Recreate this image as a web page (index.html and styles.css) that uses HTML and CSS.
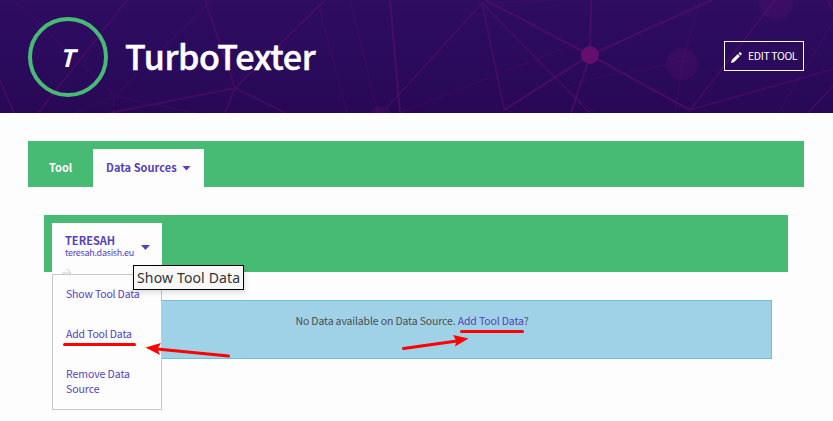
FILE: index.html
```html
<!DOCTYPE html>
<html lang="en">
<head>
<meta charset="utf-8">
<title>TurboTexter</title>
<link rel="stylesheet" href="styles.css">
</head>
<body>
<header class="hero">
  <svg class="network" viewBox="0 0 833 113" aria-hidden="true">
    <g class="faint">
      <path d="M15 0L115 96L212 0M75 113L115 96L195 113M115 96L113 113M317 0L347 113M350 0L378 113M400 113L590 38M482 3L560 0M573 83L690 60M700 0L682 64L675 113M833 22L778 113M573 94L595 113"/>
    </g>
    <g class="mid">
      <path d="M0 80L14 113M127 0L38 113M235 88L110 113M235 88L285 113M235 88L225 113M205 0L235 88L325 0M482 3L385 110M482 3L504 108M482 3L590 113M690 110L775 0M690 110L833 69M833 86L808 113M828 0L833 10"/>
    </g>
    <g class="strong">
      <path d="M390 0L400 113M485 0L590 55L504 110M590 55L571 113M591 0L590 55L712 0M590 55L690 110"/>
    </g>
    <circle class="node dim" cx="380" cy="117" r="11"/>
    <circle class="node dim" cx="682" cy="64" r="16"/>
    <circle class="node dim" cx="776" cy="3" r="17"/>
    <circle class="node" cx="590" cy="55" r="9"/>
  </svg>
  <div class="avatar">T</div>
  <h1 class="title"><span>TurboTexter</span></h1>
  <a class="edit">
    <svg class="pencil" viewBox="0 0 12 12" aria-hidden="true"><path d="M0 12L.9 8.8L7.4 2.3L9.7 4.6L3.2 11.1ZM8.2 1.5L9.3.4Q10 0 10.7.6L11.4 1.3Q12 2 11.5 2.7L10.5 3.8Z"/></svg>
    <span class="edit-label">EDIT TOOL</span>
  </a>
</header>
<main class="content">
  <nav class="tabs">
    <a class="tab"><span class="label">Tool</span></a>
    <a class="tab active"><span class="label">Data Sources</span><i class="caret"></i></a>
  </nav>
  <section class="panel">
    <div class="source-bar">
      <div class="source">
        <div class="source-text">
          <strong class="s-name">TERESAH</strong>
          <span class="s-url">teresah.dasish.eu</span>
        </div>
        <i class="caret"></i>
        <svg class="hint" viewBox="0 0 10 6" aria-hidden="true"><path d="M0 5H9M5 1L9 5"/></svg>
        <div class="menu">
          <a>Show Tool Data</a>
          <a>Add Tool Data</a>
          <a>Remove Data<br>Source</a>
        </div>
        <div class="tooltip"><span>Show Tool Data</span></div>
      </div>
    </div>
    <div class="notice"><p class="message">No Data available on Data Source. <a>Add Tool Data</a>?</p></div>
  </section>
</main>
<svg class="marks" viewBox="0 0 833 421" aria-hidden="true">
  <path class="stroke" d="M64.500 344.500H134.500M461.500 331.500H522.500M228.500 356L157 349M403.500 348.500L457 341"/>
  <path class="head" d="M145.500 347.500L161 343L157.500 348.800L160 355ZM468.500 338.500L453 335L456.500 341L455 346.500Z"/>
</svg>
</body>
</html>
```
FILE: styles.css
```css
* { box-sizing: border-box; }
body {
  margin: 0;
  height: 421px;
  position: relative;
  overflow: hidden;
  background: #fdfdfd;
  color: #4d4d4d;
  font: 11px/15px "Noto Sans CJK SC", "Noto Sans", sans-serif;
}
.hero {
  position: relative;
  height: 113px;
  padding: 0 29px 0 28px;
  display: flex;
  align-items: center;
  background: linear-gradient(#2e0d62, #280856);
  color: #fff;
}
.network { position: absolute; inset: 0; width: 833px; height: 113px; fill: none; stroke: #5a0e6c; }
.faint { stroke-width: 1.5; opacity: .25; }
.mid { stroke-width: 1.8; opacity: .5; }
.strong { stroke-width: 2.1; opacity: .6; }
.node { fill: #650e70; stroke: none; }
.dim { opacity: .25; }
.avatar {
  position: relative;
  width: 80px;
  height: 80px;
  padding-right: 2px;
  border: 4px solid #47ba73;
  border-radius: 50%;
  text-align: center;
  font-size: 24px;
  line-height: 72px;
  font-weight: 700;
  font-style: italic;
}
.title {
  position: relative;
  margin: -2px auto 0 17px;
  font-size: 34px;
  line-height: 50px;
  font-weight: 500;
  letter-spacing: -.35px;
  -webkit-text-stroke: .5px #fff;
  white-space: nowrap;
}
.edit {
  position: relative;
  width: 80px;
  height: 30px;
  margin-top: -1px;
  padding-left: 6px;
  border: 1px solid #fff;
  display: flex;
  align-items: center;
  gap: 6px;
  white-space: nowrap;
}
.edit-label { font-size: 10.5px; letter-spacing: -.36px; margin-top: -2px; }
.pencil { width: 11px; height: 11px; fill: #fff; margin-top: 2px; flex: none; }
.content { padding: 28px 29px 0 28px; }
.tabs {
  height: 46px;
  padding: 8px 8px 0;
  display: flex;
  background: #47ba73;
  color: #fff;
  font-weight: 700;
}
.tab { height: 38px; padding: 0 13px; width: 57px; display: flex; align-items: center; white-space: nowrap; }
.tab .label { margin-top: -2px; letter-spacing: .03px; }
.tab.active { width: 111px; justify-content: space-between; background: #fdfdfd; color: #5741bb; }
.caret { width: 9px; height: 5px; background: #5741bb; clip-path: polygon(0 0, 100% 0, 50% 100%); flex: none; }
.panel { padding: 28px 16px 0; }
.source-bar { height: 57px; padding: 8px 8px 0; background: #47ba73; }
.source {
  position: relative;
  width: 110px;
  height: 49px;
  padding: 0 12px 0 13px;
  display: flex;
  justify-content: space-between;
  background: #fdfdfd;
  color: #5741bb;
  white-space: nowrap;
}
.source-text { width: 71px; padding-top: 10px; display: flex; flex-direction: column; }
.s-url { font-size: 9px; line-height: 10px; letter-spacing: -.27px; }
.source .caret { margin-top: 22px; }
.hint { position: absolute; left: 10px; top: 45px; width: 10px; height: 6px; fill: none; stroke: #ccc; }
.menu {
  position: absolute;
  z-index: 2;
  left: 0;
  top: 51px;
  width: 110px;
  height: 136px;
  padding: 11px 13px;
  display: flex;
  flex-direction: column;
  gap: 25px;
  border: 1px solid #c8c8c8;
  background: #fdfdfd;
  font-size: 10.5px;
  letter-spacing: -.17px;
}
.menu a:last-child { letter-spacing: -.06px; }
.tooltip {
  position: absolute;
  z-index: 3;
  left: 81px;
  top: 42px;
  width: 111px;
  height: 25px;
  padding-left: 3px;
  border: 1px solid #000;
  background: #f7f7f7;
  color: #333;
  box-shadow: 1px 3px 5px rgba(0, 0, 0, .12);
  font: 14px/23px "Noto Sans", sans-serif;
  letter-spacing: .15px;
}
.notice {
  margin: 28px 16px 0 8px;
  height: 59px;
  padding-top: 12px;
  border: 1px solid #73bcdb;
  background: #a0d2e7;
  text-align: center;
}
.message { margin: 0; font-size: 10.5px; letter-spacing: -.14px; }
.message a { color: #5741bb; }
.marks { position: absolute; z-index: 5; left: 0; top: 0; width: 833px; height: 421px; pointer-events: none; }
.stroke { fill: none; stroke: #fe0000; stroke-width: 3; stroke-linecap: round; }
.head { fill: #fe0000; }
```
